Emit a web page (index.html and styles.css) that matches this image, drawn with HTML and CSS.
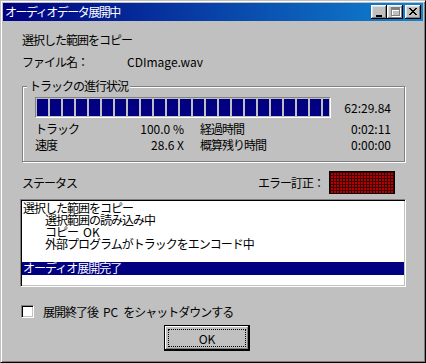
FILE: index.html
```html
<!DOCTYPE html>
<html lang="ja">
<head>
    <meta charset="UTF-8">
    <title>オーディオデータ展開中</title>
    <link rel="stylesheet" href="styles.css">
</head>
<body>
    <div class="window">
        <div class="titlebar">
            <span class="title">オーディオデータ展開中</span>
            <div class="title-buttons">
                <button class="tbtn">
                    <svg width="6" height="2" viewBox="0 0 6 2"><rect width="6" height="2" fill="#000"/></svg>
                </button>
                <button class="tbtn">
                    <svg width="10" height="10" viewBox="0 0 10 10" shape-rendering="crispEdges">
                        <path d="M1 1h9v9h-9zM2 4v5h7v-5z" fill="#fff"/>
                        <path d="M0 0h9v9h-9zM1 3v5h7v-5z" fill="#808080"/>
                    </svg>
                </button>
                <button class="tbtn close">
                    <svg width="8" height="7" viewBox="0 0 8 7" shape-rendering="crispEdges" fill="#000">
                        <rect x="0" y="0" width="2" height="1"/><rect x="6" y="0" width="2" height="1"/>
                        <rect x="1" y="1" width="2" height="1"/><rect x="5" y="1" width="2" height="1"/>
                        <rect x="2" y="2" width="4" height="1"/>
                        <rect x="3" y="3" width="2" height="1"/>
                        <rect x="2" y="4" width="4" height="1"/>
                        <rect x="1" y="5" width="2" height="1"/><rect x="5" y="5" width="2" height="1"/>
                        <rect x="0" y="6" width="2" height="1"/><rect x="6" y="6" width="2" height="1"/>
                    </svg>
                </button>
            </div>
        </div>

        <div class="content">
            <p class="line first">選択した範囲をコピー</p>
            <p class="line file"><span class="file-label">ファイル名：</span><span class="num">CDImage.wav</span></p>

            <fieldset class="group">
                <legend>トラックの進行状況</legend>
                <div class="progress-row">
                    <div class="progress"><div class="progress-fill"></div></div>
                    <span class="num">62:29.84</span>
                </div>
                <div class="stats">
                    <span>トラック</span>
                    <span class="num value">100.0 %</span>
                    <span class="label2">経過時間</span>
                    <span class="num value">0:02:11</span>
                    <span>速度</span>
                    <span class="num value">28.6 X</span>
                    <span class="label2">概算残り時間</span>
                    <span class="num value">0:00:00</span>
                </div>
            </fieldset>

            <div class="status-row">
                <span class="status-label">ステータス</span>
                <span class="ecc-label">エラー訂正：</span>
                <div class="ecc"></div>
            </div>

            <div class="listbox">
                <div class="item">選択した範囲をコピー</div>
                <div class="item indent">選択範囲の読み込み中</div>
                <div class="item indent">コピー<span class="num word">OK</span></div>
                <div class="item indent">外部プログラムがトラックをエンコード中</div>
                <div class="item"></div>
                <div class="item selected">オーディオ展開完了</div>
            </div>

            <label class="check-row">
                <span class="checkbox"></span>
                <span>展開終了後<span class="num word">PC</span>をシャットダウンする</span>
            </label>

            <div class="button-row">
                <button class="ok"><span class="focus">OK</span></button>
            </div>
        </div>
    </div>
</body>
</html>
```

FILE: styles.css
```css
* {
    box-sizing: border-box;
}
html, body {
    margin: 0;
}
body {
    width: 426px;
    height: 363px;
    overflow: hidden;
    background-color: #c0c0c0;
    color: #000;
    font-family: "Noto Sans CJK JP", "Noto Sans", sans-serif;
    font-size: 12px;
    letter-spacing: -1px;
}
.num {
    letter-spacing: 0;
}
.word {
    margin: 0 5px 0 5px;
}
.window {
    width: 426px;
    height: 363px;
    padding: 2px;
    background-color: #c0c0c0;
    border: 1px solid;
    border-color: #c0c0c0 #000 #000 #c0c0c0;
    box-shadow: inset 1px 1px 0 #fff, inset -1px -1px 0 #808080;
}
.titlebar {
    display: flex;
    align-items: center;
    height: 18px;
    padding: 0 2px;
    background: linear-gradient(to right, #000080, #1084d0);
    color: #fff;
}
.title {
    flex: 1;
    line-height: 18px;
    letter-spacing: -1.5px;
}
.title-buttons {
    display: flex;
    align-self: flex-start;
    margin-top: 2px;
}
.tbtn {
    display: flex;
    align-items: center;
    justify-content: center;
    width: 16px;
    height: 14px;
    padding: 0;
    border: none;
    background-color: #c0c0c0;
    box-shadow: inset -1px -1px 0 #000, inset 1px 1px 0 #fff, inset -2px -2px 0 #808080, inset 2px 2px 0 #dfdfdf;
}
.tbtn:first-child svg {
    margin: 7px 1px 0 0;
}
.tbtn:nth-child(2) svg {
    margin: 0 0 0 1px;
}
.tbtn.close {
    margin-left: 2px;
}
.tbtn.close svg {
    margin: 0 1px 1px 0;
}
.content {
    padding: 0 17px;
}
.line {
    margin: 0;
    padding-left: 2px;
    line-height: 14px;
}
.first {
    margin-top: 12px;
}
.file {
    display: flex;
    margin-top: 8px;
}
.file-label {
    width: 105px;
}
.group {
    margin: 10px 1px 0 2px;
    padding: 4px 13px 8px 12px;
    min-width: 0;
    border: 1px solid #808080;
    box-shadow: inset 1px 1px 0 #fff, 1px 1px 0 #fff;
}
.group legend {
    margin-left: -8px;
    padding: 0 2px;
    line-height: 14px;
    background-color: #c0c0c0;
}
.progress-row {
    display: flex;
    align-items: center;
    justify-content: space-between;
}
.progress {
    width: 296px;
    height: 21px;
    padding: 1px;
    border: 1px solid;
    border-color: #808080 #fff #fff #808080;
}
.progress-fill {
    height: 100%;
    background: repeating-linear-gradient(to right, #000080 0 11px, transparent 11px 13px);
}
.stats {
    display: grid;
    grid-template-columns: 70px 79px 1fr auto;
    margin-top: 3px;
    line-height: 16px;
}
.value {
    text-align: right;
}
.label2 {
    padding-left: 16px;
}
.status-row {
    display: flex;
    align-items: center;
    height: 23px;
    margin-top: 9px;
    padding: 0 11px 0 2px;
}
.status-label {
    flex: 1;
}
.ecc-label {
    margin-right: 5px;
}
.ecc {
    width: 66px;
    height: 23px;
    border: 1px solid #000;
    background-color: #b80000;
    background-image: linear-gradient(to right, transparent 2px, #380000 2px),
                      linear-gradient(to bottom, transparent 2px, #380000 2px);
    background-size: 3px 3px;
    background-position: 1px 1px;
}
.listbox {
    height: 88px;
    margin-top: 5px;
    padding: 2px 0;
    background-color: #fff;
    border: 1px solid;
    border-color: #808080 #fff #fff #808080;
    box-shadow: inset 1px 1px 0 #000, inset -1px -1px 0 #c0c0c0;
}
.item {
    height: 12px;
    margin: 0 1px;
    padding-left: 1px;
    line-height: 12px;
    white-space: nowrap;
}
.item.indent {
    padding-left: 23px;
}
.item.selected {
    height: 13px;
    background-color: #000080;
    color: #fff;
}
.check-row {
    display: flex;
    align-items: center;
    gap: 9px;
    height: 13px;
    margin-top: 18px;
    padding-left: 1px;
    line-height: 13px;
}
.checkbox {
    width: 13px;
    height: 13px;
    background-color: #fff;
    border: 1px solid;
    border-color: #808080 #fff #fff #808080;
    box-shadow: inset 1px 1px 0 #000, inset -1px -1px 0 #c0c0c0;
}
.button-row {
    margin-top: 7px;
    padding-left: 144px;
}
.ok {
    display: block;
    width: 86px;
    height: 26px;
    padding: 3px;
    background-color: #c0c0c0;
    border: 1px solid #000;
    box-shadow: inset -1px -1px 0 #000, inset 1px 1px 0 #fff, inset -2px -2px 0 #808080;
    font-family: inherit;
    font-size: 12px;
    letter-spacing: 0;
    color: #000;
}
.focus {
    display: flex;
    align-items: center;
    justify-content: center;
    height: 100%;
    border: 1px dotted #000;
}
```
